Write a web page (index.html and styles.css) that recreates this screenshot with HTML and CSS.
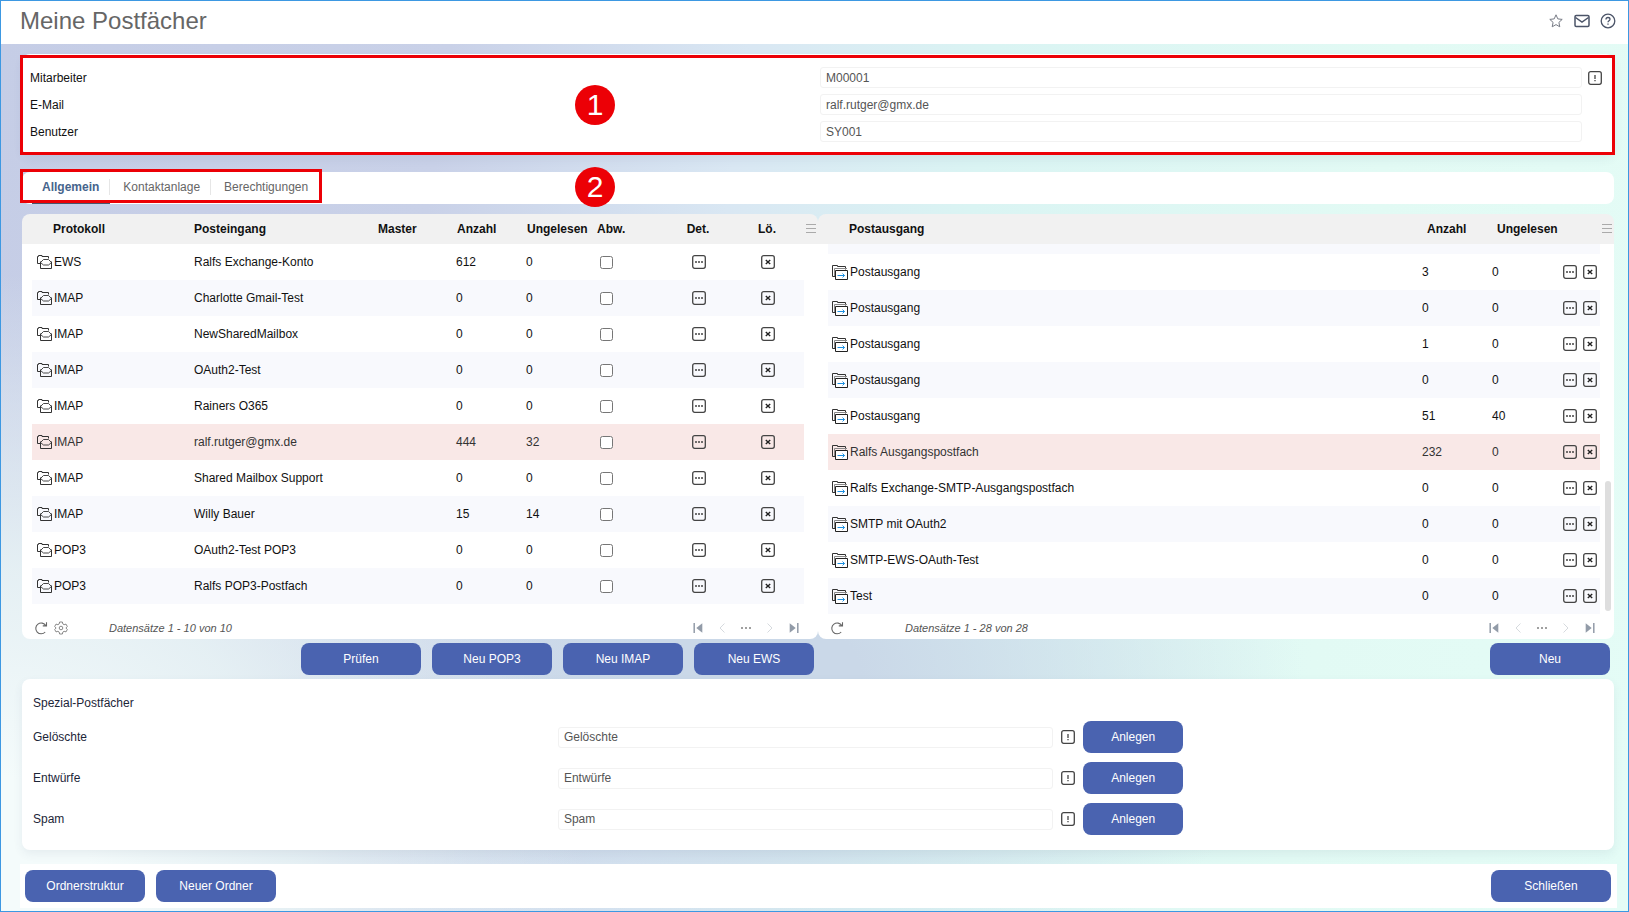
FILE: index.html
```html
<!DOCTYPE html>
<html lang="de">
<head>
    <meta charset="UTF-8">
    <meta name="viewport" content="width=device-width, initial-scale=1.0">
    <title>Meine Postfächer</title>
    <link rel="stylesheet" href="styles.css">
</head>
<body>
    <!-- Icon sprites -->
    <svg class="sprites" aria-hidden="true">
        <symbol id="i-star" viewBox="0 0 16 16"><path d="M8 1.8l1.8 4.100 4.400.500-3.300 3 .9 4.400L8 11.600l-3.800 2.200.9-4.400-3.300-3 4.400-.5z" fill="none" stroke="#777b85" stroke-linejoin="round"/></symbol>
        <symbol id="i-mail" viewBox="0 0 16 16"><rect x="1" y="2.5" width="14" height="11" rx="1.2" fill="none" stroke="#4b5468" stroke-width="1.5"/><path d="M1.500 4.500L8 9l6.500-4.500" fill="none" stroke="#4b5468" stroke-width="1.500"/></symbol>
        <symbol id="i-help" viewBox="0 0 16 16"><circle cx="8" cy="8" r="6.800" fill="none" stroke="#4b5468" stroke-width="1.300"/><path d="M6 6.400c0-1.200.9-1.900 2-1.900s2 .7 2 1.800c0 1.400-2 1.500-2 3M8 10.500v1.300" fill="none" stroke="#4b5468" stroke-width="1.300"/></symbol>
        <symbol id="i-info" viewBox="0 0 14 14"><rect x=".7" y=".7" width="12.600" height="12.600" rx="2" fill="none" stroke="#444" stroke-width="1.300"/><path d="M7 4v4M7 9v1.300" stroke="#444" stroke-width="1.300"/></symbol>
        <symbol id="i-details" viewBox="0 0 14 14"><rect x=".7" y=".7" width="12.600" height="12.600" rx="2" fill="none" stroke="#444" stroke-width="1.300"/><path d="M3 7h2M6 7h2M9 7h2" stroke="#444" stroke-width="1.400"/></symbol>
        <symbol id="i-delete" viewBox="0 0 14 14"><rect x=".7" y=".7" width="12.600" height="12.600" rx="2" fill="none" stroke="#444" stroke-width="1.300"/><path d="M4.800 5l4.400 4M9.200 5l-4.400 4" stroke="#222" stroke-width="1.400"/></symbol>
        <symbol id="i-inbox" viewBox="0 0 15 14"><path d="M3.500 8.500h-3v-7h1v-1h3.500v1h6.500v2" fill="none" stroke="#333"/><path d="M3.500 6.500v7h11v-7" fill="none" stroke="#333"/><path d="M3.500 7.500L6.500 4.500h5l3 3-3 2.500h-5z" fill="none" stroke="#333" stroke-width=".9"/></symbol>
        <symbol id="i-outbox" viewBox="0 0 16 15"><path d="M3 11.500H.5V.5h5v1h8v3" fill="none" stroke="#333"/><path d="M2.500 11V3.500H15" fill="none" stroke="#888"/><path d="M3.500 5.500h12v9h-12z" fill="#fff" stroke="#222"/><path d="M5.500 10.500h7M10.500 8.500l2 2-2 2" fill="none" stroke="#1c8fe0"/></symbol>
        <symbol id="i-refresh" viewBox="0 0 14 14"><path d="M11.200 11A5.400 5.400 0 1 1 11.800 4.600M12.500 1.300v3.600H8.800" fill="none" stroke="#666" stroke-width="1.100"/></symbol>
        <symbol id="i-settings" viewBox="0 0 14 14"><path d="M5.600 1h2.800l.4 1.900 1.300.8 1.900-.6 1.300 2.400-1.400 1.500 1.400 1.500-1.300 2.400-1.900-.6-1.300.8-.4 1.900H5.600l-.4-1.900-1.300-.8-1.900.6L.7 8.500 2.100 7 .7 5.500 2 3.100l1.900.6 1.300-.8z" fill="none" stroke="#888" stroke-linejoin="round"/><circle cx="7" cy="7" r="1.800" fill="none" stroke="#888"/></symbol>
        <symbol id="i-first" viewBox="0 0 10 12"><path d="M1.200 1v10" stroke="#929ba8" stroke-width="1.500"/><path d="M9.300 1.300v9.400L3.300 6z" fill="#929ba8"/></symbol>
        <symbol id="i-last" viewBox="0 0 10 12"><path d="M8.800 1v10" stroke="#929ba8" stroke-width="1.500"/><path d="M.7 1.300v9.400L6.700 6z" fill="#929ba8"/></symbol>
        <symbol id="i-prev" viewBox="0 0 6 10"><path d="M5.500.5L1 5l4.500 4.500" fill="none" stroke="#d6dade"/></symbol>
        <symbol id="i-next" viewBox="0 0 6 10"><path d="M.5.5L5 5 .5 9.500" fill="none" stroke="#d6dade"/></symbol>
        <symbol id="i-more" viewBox="0 0 10 2"><path d="M0 1h2M4 1h2M8 1h2" stroke="#a0a0a0" stroke-width="2"/></symbol>
        <symbol id="i-menu" viewBox="0 0 10 9"><path d="M0 .5h10M0 4.500h10M0 8.500h10" stroke="#aaa"/></symbol>
    </svg>

    <header class="page-header">
        <h1>Meine Postfächer</h1>
        <div class="header-icons">
            <button class="icon-btn" aria-label="Favorit"><svg width="16" height="16"><use href="#i-star"/></svg></button>
            <button class="icon-btn" aria-label="Nachricht"><svg width="16" height="16"><use href="#i-mail"/></svg></button>
            <button class="icon-btn" aria-label="Hilfe"><svg width="16" height="16"><use href="#i-help"/></svg></button>
        </div>
    </header>

    <main>
        <section class="card user-card">
            <div class="user-row">
                <label for="mitarbeiter">Mitarbeiter</label>
                <div class="user-field">
                    <input type="text" id="mitarbeiter" value="M00001" readonly>
                    <span class="info-slot"><button class="icon-btn" aria-label="Info Mitarbeiter"><svg width="14" height="14"><use href="#i-info"/></svg></button></span>
                </div>
            </div>
            <div class="user-row">
                <label for="email">E-Mail</label>
                <div class="user-field">
                    <input type="text" id="email" value="ralf.rutger@gmx.de" readonly>
                    <span class="info-slot"></span>
                </div>
            </div>
            <div class="user-row">
                <label for="benutzer">Benutzer</label>
                <div class="user-field">
                    <input type="text" id="benutzer" value="SY001" readonly>
                    <span class="info-slot"></span>
                </div>
            </div>
            <div class="marker marker-user"></div>
            <span class="badge badge-user">1</span>
        </section>

        <nav class="tabs">
            <button class="tab active">Allgemein</button>
            <button class="tab">Kontaktanlage</button>
            <button class="tab">Berechtigungen</button>
            <div class="marker marker-tabs"></div>
            <span class="badge badge-tabs">2</span>
        </nav>

        <div class="mailboxes">
            <section class="grid-card">
                <table class="inbox">
                    <colgroup>
                        <col class="w-proto"><col><col class="w-master"><col class="w-num"><col class="w-num">
                        <col class="w-num"><col class="w-det"><col class="w-del">
                    </colgroup>
                    <thead>
                        <tr>
                            <th class="first">Protokoll</th><th>Posteingang</th><th>Master</th><th class="num">Anzahl</th>
                            <th class="num">Ungelesen</th><th class="num">Abw.</th><th class="center">Det.</th><th class="center">Lö.</th>
                        </tr>
                    </thead>
                    <tbody id="inbox-rows"></tbody>
                </table>
                <button class="icon-btn menu-btn" aria-label="Spaltenmenü"><svg width="10" height="9"><use href="#i-menu"/></svg></button>
                <div class="grid-footer">
                    <div class="tools">
                        <button class="icon-btn" aria-label="Aktualisieren"><svg width="14" height="14"><use href="#i-refresh"/></svg></button>
                        <button class="icon-btn" aria-label="Einstellungen"><svg width="14" height="14"><use href="#i-settings"/></svg></button>
                    </div>
                    <span class="count">Datensätze 1 - 10 von 10</span>
                    <div class="pager">
                        <button class="icon-btn" aria-label="Erste Seite"><svg width="10" height="12"><use href="#i-first"/></svg></button>
                        <button class="icon-btn" aria-label="Vorherige Seite"><svg width="6" height="10"><use href="#i-prev"/></svg></button>
                        <button class="icon-btn" aria-label="Seite wählen"><svg width="10" height="2"><use href="#i-more"/></svg></button>
                        <button class="icon-btn" aria-label="Nächste Seite"><svg width="6" height="10"><use href="#i-next"/></svg></button>
                        <button class="icon-btn" aria-label="Letzte Seite"><svg width="10" height="12"><use href="#i-last"/></svg></button>
                    </div>
                </div>
            </section>

            <section class="grid-card">
                <table class="outbox">
                    <colgroup>
                        <col><col class="w-num"><col class="w-num"><col class="w-act"><col class="w-act-last">
                    </colgroup>
                    <thead>
                        <tr>
                            <th class="first">Postausgang</th><th class="offset">Anzahl</th><th class="offset">Ungelesen</th><th></th><th></th>
                        </tr>
                    </thead>
                    <tbody id="outbox-rows">
                        <tr class="cut"><td colspan="5"></td></tr>
                    </tbody>
                </table>
                <button class="icon-btn menu-btn" aria-label="Spaltenmenü"><svg width="10" height="9"><use href="#i-menu"/></svg></button>
                <div class="scroll-thumb"></div>
                <div class="grid-footer">
                    <div class="tools">
                        <button class="icon-btn" aria-label="Aktualisieren"><svg width="14" height="14"><use href="#i-refresh"/></svg></button>
                    </div>
                    <span class="count">Datensätze 1 - 28 von 28</span>
                    <div class="pager">
                        <button class="icon-btn" aria-label="Erste Seite"><svg width="10" height="12"><use href="#i-first"/></svg></button>
                        <button class="icon-btn" aria-label="Vorherige Seite"><svg width="6" height="10"><use href="#i-prev"/></svg></button>
                        <button class="icon-btn" aria-label="Seite wählen"><svg width="10" height="2"><use href="#i-more"/></svg></button>
                        <button class="icon-btn" aria-label="Nächste Seite"><svg width="6" height="10"><use href="#i-next"/></svg></button>
                        <button class="icon-btn" aria-label="Letzte Seite"><svg width="10" height="12"><use href="#i-last"/></svg></button>
                    </div>
                </div>
            </section>
        </div>

        <div class="actions">
            <div class="action-group">
                <button class="btn">Prüfen</button>
                <button class="btn">Neu POP3</button>
                <button class="btn">Neu IMAP</button>
                <button class="btn">Neu EWS</button>
            </div>
            <div class="action-group">
                <button class="btn">Neu</button>
            </div>
        </div>

        <section class="card special">
            <h2>Spezial-Postfächer</h2>
            <div class="special-row">
                <label for="geloeschte">Gelöschte</label>
                <input type="text" id="geloeschte" value="Gelöschte">
                <button class="icon-btn" aria-label="Info Gelöschte"><svg width="14" height="14"><use href="#i-info"/></svg></button>
                <button class="btn small">Anlegen</button>
            </div>
            <div class="special-row">
                <label for="entwuerfe">Entwürfe</label>
                <input type="text" id="entwuerfe" value="Entwürfe">
                <button class="icon-btn" aria-label="Info Entwürfe"><svg width="14" height="14"><use href="#i-info"/></svg></button>
                <button class="btn small">Anlegen</button>
            </div>
            <div class="special-row">
                <label for="spam">Spam</label>
                <input type="text" id="spam" value="Spam">
                <button class="icon-btn" aria-label="Info Spam"><svg width="14" height="14"><use href="#i-info"/></svg></button>
                <button class="btn small">Anlegen</button>
            </div>
        </section>
    </main>

    <footer class="page-footer">
        <button class="btn">Ordnerstruktur</button>
        <button class="btn">Neuer Ordner</button>
        <button class="btn close">Schließen</button>
    </footer>

    <script>
        const inbox = [
            ["EWS", "Ralfs Exchange-Konto", 612, 0],
            ["IMAP", "Charlotte Gmail-Test", 0, 0],
            ["IMAP", "NewSharedMailbox", 0, 0],
            ["IMAP", "OAuth2-Test", 0, 0],
            ["IMAP", "Rainers O365", 0, 0],
            ["IMAP", "ralf.rutger@gmx.de", 444, 32],
            ["IMAP", "Shared Mailbox Support", 0, 0],
            ["IMAP", "Willy Bauer", 15, 14],
            ["POP3", "OAuth2-Test POP3", 0, 0],
            ["POP3", "Ralfs POP3-Postfach", 0, 0]
        ];

        const outbox = [
            ["Postausgang", 3, 0],
            ["Postausgang", 0, 0],
            ["Postausgang", 1, 0],
            ["Postausgang", 0, 0],
            ["Postausgang", 51, 40],
            ["Ralfs Ausgangspostfach", 232, 0],
            ["Ralfs Exchange-SMTP-Ausgangspostfach", 0, 0],
            ["SMTP mit OAuth2", 0, 0],
            ["SMTP-EWS-OAuth-Test", 0, 0],
            ["Test", 0, 0]
        ];

        const selectedRow = 5;

        function iconButton(icon, label) {
            return `<button class="icon-btn" aria-label="${label}"><svg width="14" height="14"><use href="#i-${icon}"/></svg></button>`;
        }

        function addRow(bodyId, index, cells) {
            const row = document.createElement('tr');
            if (index === selectedRow) {
                row.classList.add('selected');
            } else if (index % 2 === 1) {
                row.classList.add('odd');
            }
            row.innerHTML = cells;
            document.getElementById(bodyId).appendChild(row);
        }

        inbox.forEach(([protocol, name, count, unread], i) => {
            addRow('inbox-rows', i, `
                <td><span class="name in"><svg width="15" height="14"><use href="#i-inbox"/></svg>${protocol}</span></td>
                <td>${name}</td>
                <td></td>
                <td>${count}</td>
                <td>${unread}</td>
                <td><input type="checkbox" aria-label="Abwesenheit ${name}"></td>
                <td class="center">${iconButton('details', 'Details ' + name)}</td>
                <td class="center">${iconButton('delete', 'Löschen ' + name)}</td>
            `);
        });

        outbox.forEach(([name, count, unread], i) => {
            addRow('outbox-rows', i, `
                <td><span class="name out"><svg width="16" height="15"><use href="#i-outbox"/></svg>${name}</span></td>
                <td>${count}</td>
                <td>${unread}</td>
                <td>${iconButton('details', 'Details ' + name)}</td>
                <td>${iconButton('delete', 'Löschen ' + name)}</td>
            `);
        });
    </script>
</body>
</html>
```
FILE: styles.css
```css
* {
    box-sizing: border-box;
}

body {
    font-family: "Liberation Sans", Arial, sans-serif;
    font-size: 12px;
    line-height: 16px;
    margin: 0;
    min-height: 100vh;
    display: flex;
    flex-direction: column;
    color: #111;
    border: 1px solid #3d98e2;
    padding-bottom: 3px;
    background:
        radial-gradient(ellipse 36% 65% at 0% 95%, #f4fbfb 15%, rgba(232, 243, 245, 0.9) 50%, rgba(222, 234, 241, 0) 100%),
        radial-gradient(ellipse 34% 36% at 46% 74%, #cad8e8 20%, rgba(205, 222, 234, 0) 100%),
        linear-gradient(98deg, #c5cde6 0%, #c9d1e8 26%, #d9e7f3 43%, #daf4f3 57%, #e2faf4 80%, #e4fcf6 100%);
}

.sprites {
    display: none;
}

button,
input {
    font: inherit;
}

.page-header {
    background-color: white;
    height: 43px;
    display: flex;
    justify-content: space-between;
    align-items: center;
    padding: 0 12px 4px 19px;
}

h1 {
    font-size: 24px;
    line-height: 28px;
    font-weight: normal;
    color: #666;
    margin: 0;
}

.header-icons {
    display: flex;
    gap: 10px;
}

.icon-btn {
    display: inline-flex;
    align-items: center;
    justify-content: center;
    background: none;
    border: 0;
    padding: 0;
    cursor: pointer;
}

main {
    padding: 10px 14px 0 21px;
}

.card {
    background-color: white;
    border-radius: 8px;
    box-shadow: 0 4px 10px rgba(60, 80, 120, 0.08);
}

/* Employee data */
.user-card {
    position: relative;
    display: flex;
    flex-direction: column;
    gap: 6px;
    padding: 13px 4px 13px 8px;
}

.user-row {
    display: grid;
    grid-template-columns: 1fr 1fr;
    align-items: center;
    height: 21px;
}

.user-field {
    display: flex;
    align-items: center;
}

input[type="text"] {
    flex: 1;
    min-width: 0;
    height: 21px;
    border: 1px solid #f2f2f2;
    border-radius: 3px;
    padding: 0 5px;
    color: #555;
    background-color: white;
}

.info-slot {
    display: flex;
    width: 28px;
    padding-left: 6px;
}

/* Red markers and numbers */
.marker {
    position: absolute;
    border: 3px solid #ec0006;
    pointer-events: none;
}

.marker-user {
    inset: 1px -1px 0 -2px;
}

.marker-tabs {
    top: -3px;
    bottom: 1px;
    left: -2px;
    width: 302px;
}

.badge {
    position: absolute;
    left: 553px;
    width: 40px;
    height: 40px;
    border-radius: 50%;
    background-color: #ec0006;
    color: white;
    font-size: 30px;
    line-height: 40px;
    text-align: center;
}

.badge-user {
    top: 31px;
}

.badge-tabs {
    top: -5px;
}

/* Tabs */
.tabs {
    position: relative;
    display: flex;
    align-items: center;
    height: 32px;
    margin-top: 17px;
    padding: 0 0 2px 10px;
    background-color: white;
    border-radius: 8px;
}

.tab {
    position: relative;
    background: none;
    border: 0;
    padding: 0 10px 0 13px;
    color: #666;
    cursor: pointer;
}

.tab + .tab {
    border-left: 1px solid #e6e6e6;
}

.tab.active {
    padding-left: 10px;
    font-weight: bold;
    color: #46648c;
}

.tab.active::after {
    content: "";
    position: absolute;
    left: 0;
    right: -1px;
    bottom: -9px;
    height: 2px;
    background-color: #46556e;
}

/* Mailbox lists */
.mailboxes {
    display: grid;
    grid-template-columns: 1fr 1fr;
    margin-top: 10px;
}

.grid-card {
    position: relative;
    display: flex;
    flex-direction: column;
    border-radius: 8px;
    padding: 0 14px 0 10px;
    background: linear-gradient(#f1f1f1 30px, white 30px);
}

table {
    width: 100%;
    table-layout: fixed;
    border-collapse: collapse;
}

th,
td {
    padding: 0;
    text-align: left;
    white-space: nowrap;
}

th {
    height: 30px;
}

td {
    height: 36px;
}

th.first {
    padding-left: 21px;
}

th.num {
    padding-left: 1px;
}

th.offset {
    padding-left: 5px;
}

.center {
    text-align: center;
}

td.center {
    padding-left: 2px;
}

.odd {
    background-color: #f8f9fd;
}

.selected {
    background-color: #f9e8e7;
    color: #333;
}

.cut td {
    height: 10px;
    background-color: #f8f9fd;
}

td .icon-btn {
    display: flex;
    width: 14px;
}

.center .icon-btn {
    margin: 0 auto;
}

td input {
    display: block;
    width: 13px;
    height: 13px;
    margin: 0 0 0 4px;
}

.name {
    display: flex;
    align-items: center;
}

.name.in {
    gap: 2px;
    padding-left: 5px;
}

.name.out {
    gap: 2px;
    padding-left: 4px;
}

.w-proto {
    width: 162px;
}

.w-master {
    width: 78px;
}

.w-num {
    width: 70px;
}

.w-det {
    width: 64px;
}

.w-del {
    width: 74px;
}

.w-act {
    width: 20px;
}

.w-act-last {
    width: 17px;
}

.outbox .w-num + .w-num {
    width: 71px;
}

.menu-btn {
    position: absolute;
    top: 10px;
    right: 2px;
}

.scroll-thumb {
    position: absolute;
    right: 3px;
    bottom: 28px;
    width: 6px;
    height: 130px;
    border-radius: 3px;
    background-color: #dedede;
}

.grid-footer {
    display: flex;
    align-items: center;
    height: 25px;
    margin-top: auto;
    padding: 2px 5px 0 2px;
}

.tools {
    display: flex;
    gap: 6px;
    width: 75px;
}

.count {
    font-size: 11px;
    font-style: italic;
    color: #555;
}

.pager {
    display: flex;
    align-items: center;
    gap: 16px;
    margin-left: auto;
}

/* Buttons */
.btn {
    width: 120px;
    height: 32px;
    border: 0;
    border-radius: 8px;
    background-color: #4a63b0;
    color: white;
    cursor: pointer;
}

.btn.small {
    width: 100px;
}

.actions {
    display: grid;
    grid-template-columns: 1fr 1fr;
    padding: 4px 0;
}

.action-group {
    display: flex;
    justify-content: flex-end;
    gap: 11px;
    padding-right: 4px;
}

/* Special mailboxes */
.special {
    display: flex;
    flex-direction: column;
    gap: 9px;
    padding: 16px 0 15px 11px;
    color: #1c2538;
}

.special h2 {
    font-size: 12px;
    font-weight: normal;
    margin: 0 0 1px;
}

.special-row {
    display: grid;
    grid-template-columns: 106fr 100fr 30px 100px 87fr;
    align-items: center;
}

.page-footer {
    display: flex;
    gap: 11px;
    margin: 14px 11px 0 19px;
    padding: 6px 6px 6px 5px;
    background-color: white;
}

.page-footer .close {
    margin-left: auto;
}
```
